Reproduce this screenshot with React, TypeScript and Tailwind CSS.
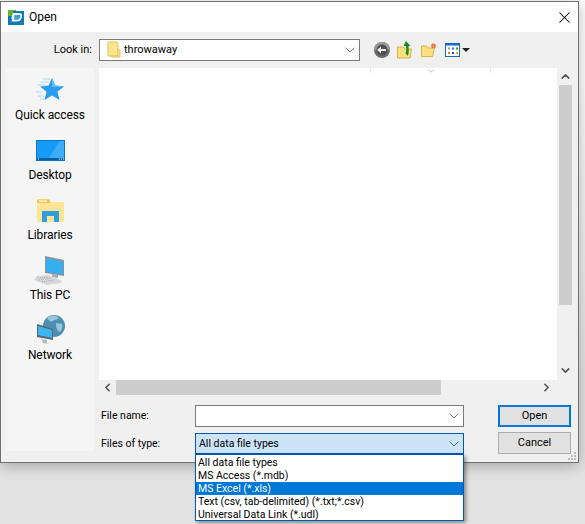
import React from 'react';
import { ChevronDown, ChevronUp, ChevronLeft, ChevronRight, X } from 'lucide-react';

const FONT = "font-['Roboto',sans-serif]";

const AppIcon = () => (
  <svg width="16" height="15" viewBox="0 0 16 15" className="shrink-0">
    <rect x="0" y="0" width="8" height="8" fill="#63b32e" />
    <rect x="5" y="1" width="11" height="14" fill="#0f78b8" />
    <rect x="0" y="6" width="16" height="9" fill="#0f78b8" />
    <path d="M5 3h6.5c2 0 3 1.4 2.6 3.4-.5 3-2.3 5.1-5 5.1H3.4l1-3H3z" fill="#fff" opacity="0.95" />
    <path d="M6.5 5h4.6c1 0 1.4.7 1.2 1.7-.3 1.6-1.3 3-3 3H6z" fill="#3aa0dc" />
  </svg>
);

const SmallFolder = () => (
  <svg width="14" height="18" viewBox="0 0 14 18" className="shrink-0">
    <path d="M1 1h9l1 1v13H1z" fill="#fde58e" stroke="#e5c15e" />
    <path d="M11 9h2v7H4v-1h7z" fill="#fde58e" stroke="#e5c15e" />
  </svg>
);

const BackIcon = () => (
  <svg width="16" height="16" viewBox="0 0 16 16">
    <circle cx="8" cy="8" r="8" fill="#6b6b6b" />
    <path d="M0 8a8 8 0 0 1 16 0z" fill="#9a9a9a" />
    <circle cx="8" cy="8" r="5.5" fill="#4e4e4e" />
    <path d="M3 8l4-3.4V7h5v2H7v2.4z" fill="#e8e8e8" />
  </svg>
);

const UpIcon = () => (
  <svg width="16" height="18" viewBox="0 0 16 18">
    <path d="M0.5 6h6l1 2h7l-1.5 9H0.5z" fill="#fbdf83" stroke="#d9b344" />
    <path d="M9 0l4.5 5H11.5c.3 4 .5 6-.5 10-1-1-2-2-2.5-3 1-2 1-4 .5-7H6.5z" fill="#1d8a1d" />
  </svg>
);

const NewFolderIcon = () => (
  <svg width="16" height="14" viewBox="0 0 16 14">
    <path d="M0.5 3h5l1 2h7l-2 8.5H0.5z" fill="#fbdf83" stroke="#d9b344" />
    <circle cx="12.5" cy="3" r="2.4" fill="#e8612c" />
    <path d="M12.5 0v6M9.5 3h6" stroke="#f7b08e" strokeWidth="0.7" />
  </svg>
);

const ViewsIcon = () => (
  <svg width="15" height="14" viewBox="0 0 15 14">
    <rect x="0.5" y="0.5" width="14" height="13" fill="#fff" stroke="#1668c9" />
    <rect x="0.5" y="0.5" width="14" height="2" fill="#1668c9" />
    <rect x="3" y="4.5" width="2" height="2" fill="#8c9bc7" />
    <rect x="7" y="4.5" width="2" height="2" fill="#4a6fc0" />
    <rect x="11" y="4.5" width="2" height="2" fill="#1f9a3f" />
    <rect x="3" y="9" width="2" height="2" fill="#e8703a" />
    <rect x="7" y="9" width="2" height="2" fill="#1f4fb0" />
    <rect x="11" y="9" width="2" height="2" fill="#e0a030" />
  </svg>
);

const StarIcon = () => (
  <svg width="30" height="26" viewBox="0 0 30 26">
    <path d="M8 2h7M5 5h8M2 8h8M1 15h6M3 19h5M5 22h4" stroke="#a8dafb" strokeWidth="1" />
    <path d="M17 1l3.4 7.6 8.6.8-6.5 5.4 2 8.2-7.5-4.4-7.5 4.4 2-8.2L5 9.4l8.6-.8z" fill="#2a9df0" />
    <path d="M17 1l3.4 7.6 8.6.8-12 .6z" fill="#66bdf6" />
  </svg>
);

const DesktopIcon = () => (
  <svg width="29" height="21" viewBox="0 0 29 21">
    <rect x="0.5" y="0.5" width="28" height="20" fill="#159bf5" stroke="#0f74bd" />
    <path d="M12 19L24 1h4v18z" fill="#3aaef8" />
    <rect x="1" y="18" width="27" height="2" fill="#0c5f9e" />
    <path d="M23 19h1M25 19h1M27 19h1M2 19h1" stroke="#fff" />
  </svg>
);

const LibrariesIcon = () => (
  <svg width="29" height="25" viewBox="0 0 29 25">
    <path d="M1 3a2 2 0 0 1 2-2h9a2 2 0 0 1 2 2v1h13a1 1 0 0 1 1 1v18a1 1 0 0 1-1 1H2a1 1 0 0 1-1-1z" fill="#fde595" />
    <path d="M1 1.5h13V5H1z" fill="#efc44f" />
    <rect x="3" y="2.5" width="8" height="1.2" fill="#fff" />
    <path d="M6 24V13h17v11h-5v-6h-7v6z" fill="#2f9fe0" />
  </svg>
);

const ThisPcIcon = () => (
  <svg width="32" height="31" viewBox="0 0 32 31">
    <path d="M11 1l19 4v16l-19-3z" fill="#8a9299" />
    <path d="M12 3l17 3.4v13L12 17z" fill="#35b0ee" />
    <path d="M18 19l6 1v3l-6-1z" fill="#a9adb1" />
    <path d="M3 21l12-1 13 6-1 2-14 2-13-5z" fill="#d5d7d9" />
    <path d="M4 23l10-1M5 25l12-2M8 27l12-2" stroke="#9da0a3" strokeWidth="0.8" strokeDasharray="1 1" />
  </svg>
);

const NetworkIcon = () => (
  <svg width="29" height="30" viewBox="0 0 29 30">
    <circle cx="18" cy="11" r="11" fill="#4d8fb3" />
    <path d="M11 3c4-3 9-3 12 0-2 2-4 1-6 3-2 1-4 0-6-3zM20 8l6 1c1 3 0 6-2 8-3-1-4-5-4-9z" fill="#9cc6dc" />
    <path d="M1 9l16 5v11L1 22z" fill="#59666f" />
    <path d="M2 11l14 4v8L2 20z" fill="#3eb5f0" />
    <path d="M5 24l6 1v3l4 1-9-1 1-1z" fill="#b6babd" />
  </svg>
);

const GripIcon = () => (
  <svg width="9" height="9" viewBox="0 0 9 9">
    <path d="M6 0h2v2H6zM3 3h2v2H3zM6 3h2v2H6zM0 6h2v2H0zM3 6h2v2H3zM6 6h2v2H6z" fill="#bcbcbc" />
  </svg>
);

const places = [
  { label: 'Quick access', icon: <StarIcon /> },
  { label: 'Desktop', icon: <DesktopIcon /> },
  { label: 'Libraries', icon: <LibrariesIcon /> },
  { label: 'This PC', icon: <ThisPcIcon /> },
  { label: 'Network', icon: <NetworkIcon /> },
];

const fileTypes = [
  'All data file types',
  'MS Access (*.mdb)',
  'MS Excel (*.xls)',
  'Text (csv, tab-delimited) (*.txt;*.csv)',
  'Universal Data Link (*.udl)',
];

export default function App() {
  return (
    <div className={`${FONT} relative w-[585px] h-[524px] overflow-hidden bg-gradient-to-b from-white from-[15%] to-[#e3e3e3] to-[72%] text-[11px] leading-[16px] text-black`}>
      <div className="h-px" />
      <div className="relative w-[579px] h-[462px] flex flex-col border border-[#707070] bg-[#f0f0f0] shadow-[0_3px_14px_rgba(0,0,0,0.28)]">
        {/* Title bar */}
        <div className="h-[30px] bg-white flex items-center pl-[7px] pr-[4px] shrink-0">
          <AppIcon />
          <span className="ml-[5px] text-[12px]">Open</span>
          <X className="ml-auto w-[19px] h-[19px] text-black" strokeWidth={1.3} />
        </div>

        {/* Look in */}
        <div className="h-[36px] flex items-center shrink-0">
          <span className="w-[91px] text-right">Look in:</span>
          <div className="ml-[7px] w-[261px] h-[22px] border border-[#7a7a7a] bg-white flex items-center pl-[7px] pr-px">
            <SmallFolder />
            <span className="ml-[3px]">throwaway</span>
            <ChevronDown className="ml-auto w-[16px] h-[16px] text-[#555]" strokeWidth={1.2} />
          </div>
          <div className="ml-[14px] flex items-center gap-[7px]">
            <BackIcon />
            <UpIcon />
            <span className="ml-[1px]"><NewFolderIcon /></span>
            <div className="ml-[1px] flex items-center gap-[2px]">
              <ViewsIcon />
              <div className="w-0 h-0 border-x-[4px] border-x-transparent border-t-[4px] border-t-[#222]" />
            </div>
          </div>
        </div>

        {/* Places + files */}
        <div className="flex-1 flex pl-[5px] pr-[6px] min-h-0">
          <div className="w-[88px] h-[383px] bg-[#f5f5f5] flex flex-col items-center pt-[6px] shrink-0 text-[12px]">
            {places.map((p) => (
              <div key={p.label} className="flex flex-col items-center h-[60px] w-full">
                <div className="h-[32px] flex items-center justify-center shrink-0">{p.icon}</div>
                <span className="mt-px whitespace-nowrap tracking-[-0.1px]">{p.label}</span>
              </div>
            ))}
          </div>

          <div className="ml-[5px] flex-1 flex flex-col">
            <div className="flex h-[327px]">
              <div className="flex-1 flex flex-col">
                <div className="flex-1 bg-white relative">
                  <div className="absolute left-[271px] top-0 h-[5px] w-px bg-[#e5e5e5]" />
                  <div className="absolute left-[391px] top-0 h-[5px] w-px bg-[#e5e5e5]" />
                  <ChevronDown className="absolute left-[326px] -top-[2px] w-[12px] h-[10px] text-[#888]" strokeWidth={1.3} />
                </div>
                <div className="h-[15px] bg-[#f0f0f0] flex items-center">
                  <ChevronLeft className="ml-[2px] w-[13px] h-[13px] text-[#555] shrink-0" strokeWidth={3} />
                  <div className="ml-[2px] w-[325px] h-full bg-[#cdcdcd]" />
                  <ChevronRight className="ml-auto mr-[4px] w-[13px] h-[13px] text-[#555] shrink-0" strokeWidth={3} />
                </div>
              </div>
              <div className="w-[13px] ml-[2px] flex flex-col items-center">
                <ChevronUp className="mt-[2px] w-[13px] h-[13px] text-[#555] shrink-0" strokeWidth={3} />
                <div className="mt-[2px] w-full h-[220px] bg-[#cdcdcd]" />
                <ChevronDown className="mt-[59px] w-[13px] h-[13px] text-[#555] shrink-0" strokeWidth={3} />
              </div>
            </div>

            <div className="flex mt-[10px]">
              <div className="w-[96px] pl-[2px] flex flex-col text-[10.5px]">
                <span className="h-[22px] flex items-center">File name:</span>
                <span className="mt-[6px] h-[21px] flex items-center">Files of type:</span>
              </div>
              <div className="w-[269px] flex flex-col">
                <div className="h-[22px] border border-[#7a7a7a] bg-white flex items-center justify-end pr-px">
                  <ChevronDown className="w-[16px] h-[16px] text-[#555]" strokeWidth={1.2} />
                </div>
                <div className="mt-[6px] h-[21px] border border-[#0058a8] bg-[#cce4f7] flex items-center pl-[3px] pr-px">
                  <span className="text-[10.5px]">All data file types</span>
                  <ChevronDown className="ml-auto w-[16px] h-[16px] text-[#444]" strokeWidth={1.2} />
                </div>
              </div>
              <div className="ml-[34px] w-[73px] flex flex-col">
                <button className="h-[22px] border-2 border-[#0078d7] bg-[#e1e1e1] text-center">Open</button>
                <button className="mt-[5px] h-[22px] border border-[#adadad] bg-[#e1e1e1] text-center">Cancel</button>
              </div>
            </div>
          </div>
        </div>

        {/* Resize grip */}
        <div className="absolute right-px bottom-px leading-none">
          <GripIcon />
        </div>
      </div>

      {/* Open dropdown */}
      <div className="absolute left-[195px] top-[454px] w-[269px] h-[67px] border border-[#0058a8] bg-white flex flex-col text-[10.5px] shadow-[2px_2px_4px_rgba(0,0,0,0.4)]">
        {fileTypes.map((t, i) => (
          <div key={t} className={`h-[13px] pl-[2px] leading-[13px] whitespace-nowrap ${i === 0 ? 'mt-px' : ''} ${i === 2 ? 'bg-[#0078d7] text-white' : ''}`}>
            {t}
          </div>
        ))}
      </div>
    </div>
  );
}
